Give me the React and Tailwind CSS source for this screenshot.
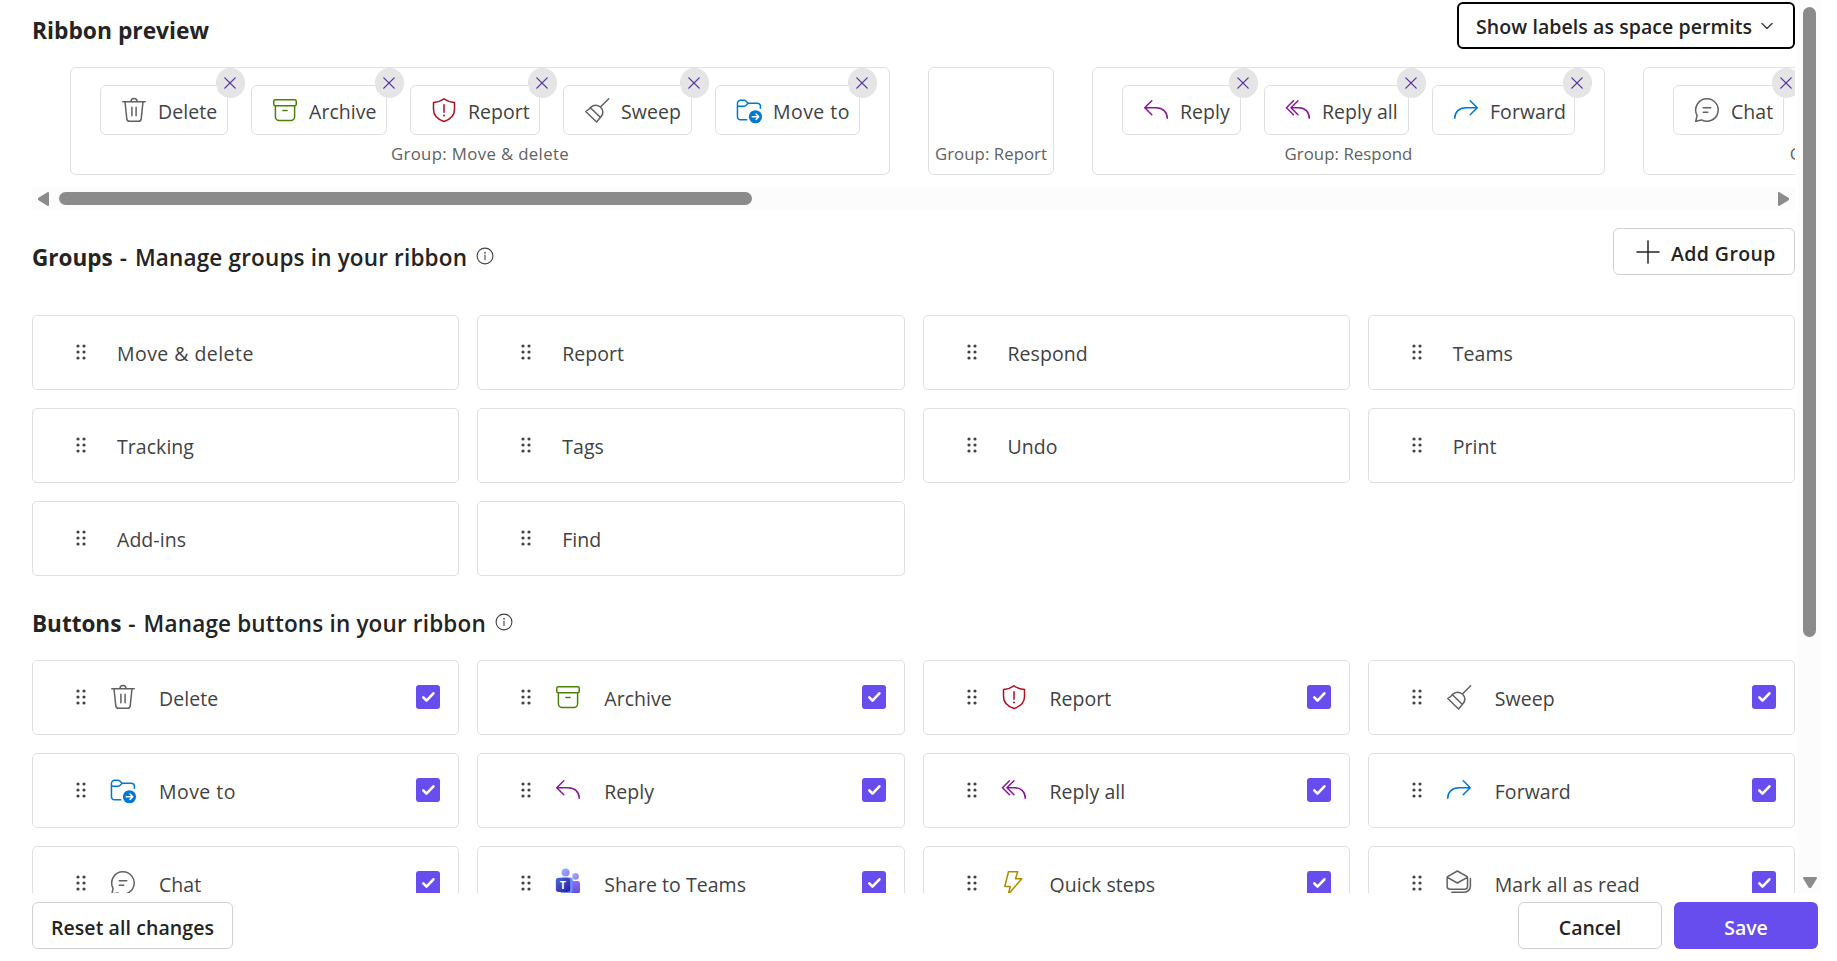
import React from 'react';
import clsx from 'clsx';

const Svg = ({ className, children }) => (
    <svg
        viewBox="0 0 20 20"
        fill="none"
        stroke="currentColor"
        strokeWidth="1"
        strokeLinecap="round"
        strokeLinejoin="round"
        className={clsx('size-[30px] shrink-0', className)}
    >
        {children}
    </svg>
);

const icons = {
    delete: (
        <Svg className="text-[#616161]">
            <path d="M2.5 4.5h15M8 4.3a2 2 0 0 1 4 0M4 4.5l1.2 11.4a1.8 1.8 0 0 0 1.8 1.6h6a1.8 1.8 0 0 0 1.8-1.6L16 4.5M8.6 8.1v5.8M11.4 8.1v5.8" />
        </Svg>
    ),
    archive: (
        <Svg className="text-[#498205]">
            <rect x="2.5" y="3.2" width="15" height="3.9" rx="1" />
            <path d="M3.6 7.1v7.4a2.5 2.5 0 0 0 2.5 2.5h7.8a2.5 2.5 0 0 0 2.5-2.5V7.1M8.6 10.3h2.8" />
        </Svg>
    ),
    report: (
        <Svg className="text-[#b10e1c]">
            <path d="M10 2.5c2 1.5 4.3 2.3 7 2.5v4.7c0 3.7-2.3 6.4-7 8-4.7-1.6-7-4.3-7-8V5c2.7-.2 5-1 7-2.5zM10 6.5v5" />
            <circle cx="10" cy="13.7" r=".65" fill="currentColor" stroke="none" />
        </Svg>
    ),
    sweep: (
        <Svg className="text-[#616161]">
            <path d="M17.8 2.5l-5.2 5.2M2.5 11c1.7-1.2 2.7-2 3.2-2.8 2-1.6 4.7-1.6 6.6-.2 1.8 1.9 2.1 4.5.2 6.6-.9 1-1.7 2-2.8 3.4zM5.6 8.5l6.7 6.5" />
        </Svg>
    ),
    moveTo: (
        <Svg className="text-[#0078d4]">
            <path d="M8.5 16.5h-4a2.2 2.2 0 0 1-2.2-2.2V5.6a2.1 2.1 0 0 1 2.1-2.1h2.4c.4 0 .8.2 1.1.5l1.5 1.5h6a2.2 2.2 0 0 1 2.2 2.2v1.2M2.3 7.5h4.5c.4 0 .8-.2 1.1-.5l1.5-1.5" />
            <circle cx="14.3" cy="14.5" r="4.4" fill="currentColor" stroke="none" />
            <path d="M12.2 14.5h4.2M14.7 12.7l1.8 1.8-1.8 1.8" stroke="#fff" />
        </Svg>
    ),
    reply: (
        <Svg className="text-[#881798]">
            <path d="M7.2 3.8L2.5 8.5l4.7 4.7M2.7 8.5h7.3c4.5 0 7.5 2.8 7.5 7" />
        </Svg>
    ),
    replyAll: (
        <Svg className="text-[#881798]">
            <path d="M7 3.8L2.3 8.5 7 13.2M10 3.8L5.3 8.5l4.7 4.7M5.5 8.5h5c4.3 0 7 2.8 7 7" />
        </Svg>
    ),
    forward: (
        <Svg className="text-[#0078d4]">
            <path d="M12.8 3.8l4.7 4.7-4.7 4.7M17.3 8.5H10c-4.5 0-7.5 2.8-7.5 7" />
        </Svg>
    ),
    chat: (
        <Svg className="text-[#616161]">
            <path d="M10 2.5a7.5 7.5 0 1 1-3.6 14.1L2.5 17.5l.9-3.9A7.5 7.5 0 0 1 10 2.5zM7.5 8.5h5M7.5 11.5h3" />
        </Svg>
    ),
    teams: (
        <Svg>
            <defs>
                <linearGradient id="teamsHead" x1="0" y1="0" x2="1" y2="1">
                    <stop offset="0" stopColor="#8fc0fa" />
                    <stop offset="1" stopColor="#9c75ec" />
                </linearGradient>
                <linearGradient id="teamsBody" x1="0" y1="0" x2="0" y2="1">
                    <stop offset="0" stopColor="#9a6df0" />
                    <stop offset="1" stopColor="#4f4bd8" />
                </linearGradient>
                <linearGradient id="teamsTile" x1="0" y1="0" x2="1" y2="1">
                    <stop offset="0" stopColor="#4a6cdf" />
                    <stop offset="1" stopColor="#3017a0" />
                </linearGradient>
            </defs>
            <g stroke="none">
                <path d="M12.5 8.6h4a1.5 1.5 0 0 1 1.5 1.5V15a3.5 3.5 0 0 1-5.5 2.8z" fill="url(#teamsBody)" />
                <path d="M4.8 8.1a1.8 1.8 0 0 1 1.8-1.8h4.6a2 2 0 0 1 2 2v6.2a4.2 4.2 0 0 1-8.4 0z" fill="#6b8bfa" />
                <circle cx="8.4" cy="3" r="2.7" fill="url(#teamsHead)" />
                <circle cx="15" cy="5.6" r="2.2" fill="url(#teamsHead)" />
                <rect x="1.9" y="6.5" width="9.5" height="9.5" rx="1.8" fill="url(#teamsTile)" />
                <text x="6.65" y="13.9" textAnchor="middle" fontSize="7.2" fontWeight="700" fontFamily="Open Sans, sans-serif" fill="#fff">T</text>
            </g>
        </Svg>
    ),
    quickSteps: (
        <Svg className="text-[#ae8c00]">
            <path d="M6.3 2.5h6.2l-1.5 4.7h4.2L6.2 17.5l1.3-5.2H3.9z" />
        </Svg>
    ),
    markRead: (
        <Svg className="text-[#616161]">
            <path d="M2.4 5.7L8.9 2l6.5 3.7c.2.2.3.4.3.7v5.7a2 2 0 0 1-2 2H4.1a2 2 0 0 1-2-2V6.4c0-.3.1-.5.3-.7zM2.2 6.2l6.7 3.8 6.7-3.8M17.6 7v5.1a4 4 0 0 1-4 4H5.2" />
        </Svg>
    ),
};

const ribbonGroups = [
    {
        name: 'Move & delete',
        width: 'w-[820px]',
        buttons: [
            { label: 'Delete', icon: 'delete', width: 'w-32' },
            { label: 'Archive', icon: 'archive', width: 'w-34' },
            { label: 'Report', icon: 'report', width: 'w-[130px]' },
            { label: 'Sweep', icon: 'sweep', width: 'w-[129px]' },
            { label: 'Move to', icon: 'moveTo', width: 'w-[145px]' },
        ],
    },
    { name: 'Report', width: 'w-[126px]', buttons: [] },
    {
        name: 'Respond',
        width: 'w-[513px]',
        buttons: [
            { label: 'Reply', icon: 'reply', width: 'w-[119px]' },
            { label: 'Reply all', icon: 'replyAll', width: 'w-[145px]' },
            { label: 'Forward', icon: 'forward', width: 'w-[143px]' },
        ],
    },
    {
        name: 'Teams',
        width: 'w-[404px]',
        buttons: [{ label: 'Chat', icon: 'chat', width: 'w-[111px]' }],
    },
];

const groups = ['Move & delete', 'Report', 'Respond', 'Teams', 'Tracking', 'Tags', 'Undo', 'Print', 'Add-ins', 'Find'];

const buttons = [
    ['Delete', 'delete'],
    ['Archive', 'archive'],
    ['Report', 'report'],
    ['Sweep', 'sweep'],
    ['Move to', 'moveTo'],
    ['Reply', 'reply'],
    ['Reply all', 'replyAll'],
    ['Forward', 'forward'],
    ['Chat', 'chat'],
    ['Share to Teams', 'teams'],
    ['Quick steps', 'quickSteps'],
    ['Mark all as read', 'markRead'],
];

// "Move ..." labels are set a little looser than the rest
const labelTracking = (label) => (label.startsWith('Move') ? 'tracking-[0.45px]' : 'tracking-[0.05px]');

const DragDots = () => (
    <svg viewBox="0 0 10 16" className="mb-px ml-[43px] h-4 w-2.5 shrink-0 fill-[#424242]">
        {[2, 8, 14].map((y) => (
            <React.Fragment key={y}>
                <circle cx="2" cy={y} r="1.6" />
                <circle cx="8" cy={y} r="1.6" />
            </React.Fragment>
        ))}
    </svg>
);

const InfoIcon = () => (
    <svg viewBox="0 0 18 18" className="mb-[5px] size-[18px]" fill="none" stroke="#424242" strokeWidth="1.1">
        <circle cx="9" cy="9" r="7.9" />
        <path d="M9 8v4.7" strokeLinecap="round" />
        <circle cx="9" cy="5.7" r=".85" fill="#424242" stroke="none" />
    </svg>
);

const Checkbox = () => (
    <span className="mr-[18px] mb-px ml-auto flex size-6 items-center justify-center rounded-[3px] bg-[#674cee]">
        <svg viewBox="0 0 24 24" className="size-6" fill="none" stroke="#fff" strokeWidth="2.6" strokeLinecap="round" strokeLinejoin="round">
            <path d="M7.3 12.4l3.2 3.2 6.9-7.3" />
        </svg>
    </span>
);

const RibbonButton = ({ label, icon, width }) => (
    <div className={clsx('relative flex h-[50px] shrink-0 items-center rounded-md border border-[#e0e0e0] pl-[18px]', width)}>
        {icons[icon]}
        <span className={clsx('ml-[9px] whitespace-nowrap pt-[3px]', labelTracking(label))}>{label}</span>
        <span className="absolute -top-[18px] -right-[18px] flex h-[30px] w-[29px] items-center justify-center rounded-full bg-[#e5e5e5]">
            <svg viewBox="0 0 12 12" className="mr-px size-3" stroke="#4f2a9e" strokeWidth="1.2" strokeLinecap="round">
                <path d="M.8.8l10.4 10.4M11.2.8L.8 11.2" />
            </svg>
        </span>
    </div>
);

const SectionTitle = ({ name, text }) => (
    <h2 className="flex items-center text-[22.5px] leading-8 font-semibold whitespace-nowrap text-[#242424]">
        <span className="font-bold">{name}</span>
        <span className="mr-2 ml-[7px]">-</span>
        <span className="mr-[9px] tracking-[0.17px]">{text}</span>
        <InfoIcon />
    </h2>
);

const App = () => {
    return (
        <div className="flex h-[961px] w-full flex-col overflow-hidden bg-white font-['Open_Sans',sans-serif] text-[19.5px] text-[#424242]">
            <div className="flex h-[893px] overflow-hidden">
                <main className="ml-8 w-[1763px] shrink-0">
                    {/* Ribbon preview */}
                    <div className="flex h-[67px] items-start justify-between pt-0.5">
                        <h2 className="pt-[13px] text-[22.8px] leading-8 font-bold text-[#242424]">Ribbon preview</h2>
                        <button className="flex h-[47px] w-[338px] items-center rounded-md border-[2.5px] border-black pl-[17px] font-semibold whitespace-nowrap text-[#242424]">
                            <span className="pt-0.5 tracking-[0.08px]">Show labels as space permits</span>
                            <svg viewBox="0 0 12 8" className="ml-[9px] h-2 w-3" fill="none" stroke="#424242" strokeWidth="1.5" strokeLinecap="round" strokeLinejoin="round">
                                <path d="M1 1.5l5 5 5-5" />
                            </svg>
                        </button>
                    </div>

                    <div className="flex h-[120px] gap-[38px] overflow-hidden pl-[38px]">
                        {ribbonGroups.map((group) => (
                            <div key={group.name} className={clsx('flex h-[108px] shrink-0 flex-col rounded-md border border-[#e0e0e0] pt-[17px]', group.width)}>
                                <div className="flex h-[50px] gap-[23px] pl-[29px]">
                                    {group.buttons.map((button) => (
                                        <RibbonButton key={button.label} {...button} />
                                    ))}
                                </div>
                                <div
                                    className={clsx(
                                        'mt-[7px] text-center text-[16.8px] leading-6 whitespace-nowrap text-[#616161]',
                                        group.buttons.length > 4 ? 'tracking-[0.35px]' : 'tracking-[0.05px]'
                                    )}
                                >
                                    Group: {group.name}
                                </div>
                            </div>
                        ))}
                    </div>

                    <div className="flex h-[23px] items-center bg-[#fcfcfc] px-1.5">
                        <svg viewBox="0 0 11 14" className="h-3.5 w-[11px]" fill="#8b8b8b" stroke="#8b8b8b" strokeWidth="2" strokeLinejoin="round">
                            <path d="M10 1v12L1 7.5v-1z" />
                        </svg>
                        <div className="ml-2.5 h-[13px] w-[693px] rounded-full bg-[#8b8b8b]" />
                        <svg viewBox="0 0 11 14" className="ml-auto h-3.5 w-[11px]" fill="#8b8b8b" stroke="#8b8b8b" strokeWidth="2" strokeLinejoin="round">
                            <path d="M1 1v12l9-5.5v-1z" />
                        </svg>
                    </div>

                    {/* Groups */}
                    <div className="flex h-[105px] items-start justify-between pt-[18px]">
                        <div className="pt-3.5">
                            <SectionTitle name="Groups" text="Manage groups in your ribbon" />
                        </div>
                        <button className="flex h-[47px] w-[182px] items-center rounded-md border border-[#d1d1d1] pl-[22px] font-semibold whitespace-nowrap text-[#242424]">
                            <svg viewBox="0 0 24 24" className="size-6" stroke="#242424" strokeWidth="1.5" strokeLinecap="round">
                                <path d="M12 1v22M1 12h22" />
                            </svg>
                            <span className="ml-[11px] pt-1 tracking-[0.4px]">Add Group</span>
                        </button>
                    </div>
                    <div className="grid grid-cols-4 gap-[18px]">
                        {groups.map((name) => (
                            <div key={name} className="flex h-[75px] items-center rounded-[5px] border border-[#e0e0e0]">
                                <DragDots />
                                <span className={clsx('ml-[31px] pt-0.5', labelTracking(name))}>{name}</span>
                            </div>
                        ))}
                    </div>

                    {/* Buttons */}
                    <div className="h-[84px] pt-8">
                        <SectionTitle name="Buttons" text="Manage buttons in your ribbon" />
                    </div>
                    <div className="grid grid-cols-4 gap-[18px]">
                        {buttons.map(([label, icon]) => (
                            <div key={label} className="flex h-[75px] items-center rounded-[5px] border border-[#e0e0e0]">
                                <DragDots />
                                <span className="mb-px ml-[22px]">{icons[icon]}</span>
                                <span className={clsx('ml-[21px] pt-0.5', labelTracking(label))}>{label}</span>
                                <Checkbox />
                            </div>
                        ))}
                    </div>
                </main>

                {/* Vertical scrollbar */}
                <div className="ml-[3px] flex w-[23px] flex-col items-center bg-[#fcfcfc] pt-[7px] pb-[5px]">
                    <div className="h-[630px] w-[13px] rounded-full bg-[#8b8b8b]" />
                    <svg viewBox="0 0 14 11" className="mt-auto h-[11px] w-3.5" fill="#8b8b8b" stroke="#8b8b8b" strokeWidth="2" strokeLinejoin="round">
                        <path d="M1 1h12L7.5 10h-1z" />
                    </svg>
                </div>
            </div>

            {/* Footer actions */}
            <footer className="mt-[9px] ml-8 flex w-[1786px] font-semibold text-[#242424]">
                <button className="h-[47px] w-[201px] rounded-md border border-[#d1d1d1] pt-1 tracking-[0.08px] whitespace-nowrap">Reset all changes</button>
                <button className="ml-auto h-[47px] w-36 rounded-md border border-[#d1d1d1] pt-1">Cancel</button>
                <button className="ml-3 h-[47px] w-36 rounded-md bg-[#674cee] pt-1 text-white">Save</button>
            </footer>
        </div>
    );
};

export default App;
